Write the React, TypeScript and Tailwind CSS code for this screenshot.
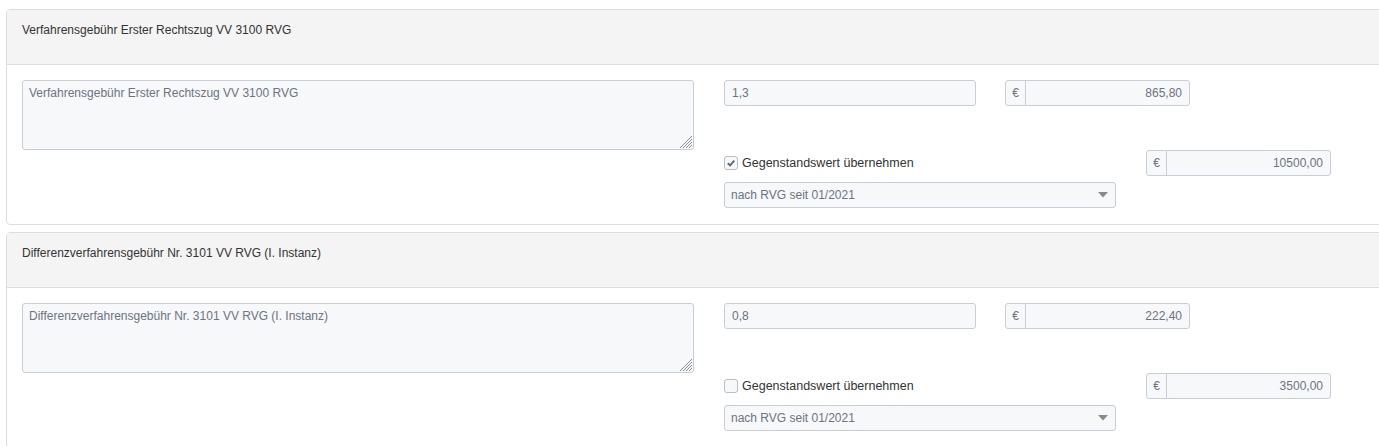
const font = { fontFamily: '"Liberation Sans", Arial, sans-serif' };

type Fee = {
  title: string;
  factor: string;
  amount: string;
  checked: boolean;
  value: string;
};

const fees: Fee[] = [
  {
    title: "Verfahrensgebühr Erster Rechtszug VV 3100 RVG",
    factor: "1,3",
    amount: "865,80",
    checked: true,
    value: "10500,00",
  },
  {
    title: "Differenzverfahrensgebühr Nr. 3101 VV RVG (I. Instanz)",
    factor: "0,8",
    amount: "222,40",
    checked: false,
    value: "3500,00",
  },
];

function EuroInput({ value }: { value: string }) {
  return (
    <div className="flex h-[26px] w-[185px] rounded-[3px] border border-[#c9ced6] bg-[#f7f8fa] text-[12px] text-[#6b7480]">
      <div className="flex w-[20px] items-center justify-center border-r border-[#c9ced6]">€</div>
      <div className="flex flex-1 items-center justify-end pr-[7px]">{value}</div>
    </div>
  );
}

function Checkbox({ checked }: { checked: boolean }) {
  return (
    <div className="flex h-[14px] w-[14px] items-center justify-center rounded-[3px] border border-[#b9bec6] bg-[#f7f8fa]">
      {checked && (
        <svg width="10" height="10" viewBox="0 0 10 10">
          <path d="M1.8 5.2 L4.1 7.4 L8.3 2.7" fill="none" stroke="#5f6b7a" strokeWidth="2" />
        </svg>
      )}
    </div>
  );
}

// textarea resize grip, drawn over the corner
function Grip() {
  return (
    <svg width="13" height="13" viewBox="0 0 13 13" className="pointer-events-none absolute right-[2px] bottom-[2px]">
      <g stroke="#8c8c8c" strokeWidth="1">
        <line x1="13" y1="1" x2="1" y2="13" />
        <line x1="13" y1="4" x2="4" y2="13" />
        <line x1="13" y1="7" x2="7" y2="13" />
        <line x1="13" y1="10" x2="10" y2="13" />
      </g>
    </svg>
  );
}

function FeePanel({ fee }: { fee: Fee }) {
  return (
    <div className="w-[1400px] rounded-[4px] border border-[#dddddd] bg-white">
      <div className="h-[55px] border-b border-[#dddddd] bg-[#f4f4f4] px-[15px] pt-[11px] text-[12px] text-[#333333]">
        {fee.title}
      </div>
      <div className="flex gap-[30px] px-[15px] pt-[15px] pb-[16px]">
        <div className="relative h-[70px] w-[672px]">
          <textarea
            readOnly
            value={fee.title}
            className="block h-full w-full resize-none rounded-[3px] border border-[#c9ced6] bg-[#f7f8fa] px-[6px] pt-[3px] text-[12px] text-[#6b7480] outline-none"
            style={font}
          />
          <Grip />
        </div>
        <div className="flex flex-col">
          <div className="flex gap-[29px]">
            <div className="flex h-[26px] w-[252px] items-center rounded-[3px] border border-[#c9ced6] bg-[#f7f8fa] px-[7px] text-[12px] text-[#6b7480]">
              {fee.factor}
            </div>
            <EuroInput value={fee.amount} />
          </div>
          <div className="mt-[44px] flex gap-[30px]">
            <div className="flex w-[392px] flex-col">
              <div className="flex h-[26px] items-center gap-[4px] text-[12.5px] text-[#333333]">
                <Checkbox checked={fee.checked} />
                <span>Gegenstandswert übernehmen</span>
              </div>
              <div className="mt-[6px] flex h-[26px] items-center justify-between rounded-[3px] border border-[#c9ced6] bg-[#f7f8fa] pl-[6px] pr-[6px] text-[12px] text-[#6b7480]">
                <span>nach RVG seit 01/2021</span>
                <svg width="10" height="6" viewBox="0 0 10 6" className="mr-[1px]">
                  <path d="M0 0 L10 0 L5 5.5 Z" fill="#8a8a8a" />
                </svg>
              </div>
            </div>
            <EuroInput value={fee.value} />
          </div>
        </div>
      </div>
    </div>
  );
}

export default function App() {
  return (
    <div className="h-[446px] w-[1379px] overflow-hidden bg-white" style={font}>
      <div className="flex flex-col gap-[7px] pl-[6px] pt-[9px]">
        {fees.map((fee) => (
          <FeePanel key={fee.title} fee={fee} />
        ))}
      </div>
    </div>
  );
}
